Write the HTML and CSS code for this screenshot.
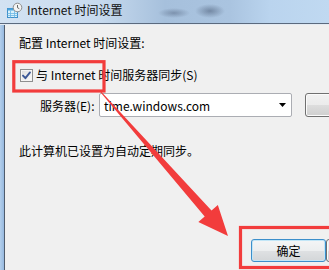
FILE: index.html
```html
<!DOCTYPE html>
<html lang="zh-CN">
<head>
<meta charset="utf-8">
<title>Internet 时间设置</title>
<link rel="stylesheet" href="styles.css">
</head>
<body>
<div class="window">
  <div class="titlebar">
    <svg class="app-icon" width="18" height="16" viewBox="0 0 18 16">
      <rect x="2.5" y="6.5" width="10" height="9" fill="#d9f1fb" stroke="#3f8fc9"/>
      <rect x="2.5" y="6.5" width="10" height="2" fill="#4aa3dd"/>
      <path d="M5.5 8.5v7M9.5 8.5v7M2.5 11.5h10M2.5 13.5h10" stroke="#6bb6e4" stroke-width="0.8"/>
      <circle cx="12.5" cy="5.5" r="4.3" fill="#f4f4f4" stroke="#8d8d8d"/>
      <path d="M12.5 3v2.7l1.8 1" stroke="#555" stroke-width="0.9" fill="none"/>
    </svg>
    <span class="title">Internet 时间设置</span>
  </div>
  <div class="frame">
    <div class="frame-edge"></div>
    <div class="content">
      <div class="heading">配置 Internet 时间设置:</div>
      <label class="check-row">
        <span class="checkbox">
          <svg width="11" height="11" viewBox="0 0 11 11"><path d="M2 5.6 L4.4 8.2 L9 2.4" fill="none" stroke="#3b5796" stroke-width="1.9" stroke-linecap="round" stroke-linejoin="round"/></svg>
        </span>
        <span class="check-label">与 Internet 时间服务器同步(S)</span>
      </label>
      <div class="server-row">
        <span class="server-label">服务器(E):</span>
        <div class="combo">
          <span class="combo-value">time.windows.com</span>
          <svg class="combo-arrow" width="7" height="4" viewBox="0 0 7 4"><path d="M0 0h7L3.5 4z" fill="#000"/></svg>
        </div>
        <button class="btn btn-now"></button>
      </div>
      <div class="status">此计算机已设置为自动定期同步。</div>
      <div class="footer">
        <button class="btn btn-ok">确定</button>
        <button class="btn btn-cancel"></button>
      </div>
    </div>
  </div>
  <svg class="annotations" width="329" height="270" viewBox="0 0 329 270">
    <rect x="13.8" y="61.7" width="90.2" height="29.3" fill="none" stroke="#f23c3c" stroke-width="3.2"/>
    <rect x="240.5" y="227.5" width="100" height="40" fill="none" stroke="#f23c3c" stroke-width="3.2"/>
    <polygon points="100.4,90.7 211.5,210.5 217.85,204.9 228,236 198.35,222.1 204.7,216.5 99.6,91.3" fill="#f23c3c"/>
  </svg>
</div>
</body>
</html>
```

FILE: styles.css
```css
html, body {
  margin: 0;
  padding: 0;
}

body {
  width: 329px;
  height: 270px;
  overflow: hidden;
  font-family: "Noto Sans CJK SC", "Noto Sans", sans-serif;
  font-size: 12px;
  color: #000;
}

.window {
  position: relative;
  width: 329px;
  height: 270px;
  display: flex;
  flex-direction: column;
  background: #f0f0f0;
  overflow: hidden;
}

.titlebar {
  flex: none;
  height: 24px;
  display: flex;
  align-items: flex-start;
  padding-top: 2px;
  box-sizing: border-box;
  border-bottom: 1px solid #5b6a7e;
  background:
    radial-gradient(ellipse 16px 5px at 174px 13px, rgba(90, 108, 135, 0.55), rgba(90, 108, 135, 0)),
    radial-gradient(ellipse 15px 7px at 210px 11px, rgba(80, 98, 125, 0.6), rgba(80, 98, 125, 0)),
    linear-gradient(90deg, #d3e2f2 0px, #c7daee 100px, #a6c0dc 165px, #aac4e0 230px, #bad4ee 270px, #c0d9f1 329px);
}

.app-icon {
  margin-left: 5px;
  flex: none;
}

.title {
  margin-left: 4px;
  line-height: 16px;
  font-size: 12px;
  color: #111;
}

.frame {
  flex: 1;
  display: flex;
  border-top: 1px solid #e4ebf3;
}

.frame-edge {
  width: 4px;
  flex: none;
  background: linear-gradient(90deg, #b3cfec, #97b9df);
  border-right: 1px solid #4f5c6d;
}

.content {
  flex: 1;
  display: flex;
  flex-direction: column;
  padding: 10px 0 0 14px;
  background: #f0f0f0;
}

.heading {
  line-height: 16px;
}

.check-row {
  display: flex;
  align-items: center;
  height: 16px;
  margin-top: 16px;
}

.checkbox {
  width: 13px;
  height: 13px;
  box-sizing: border-box;
  margin-left: 1px;
  border: 1px solid #8e8f8f;
  background: linear-gradient(135deg, #dcdcdc, #fbfbfb);
  box-shadow: inset 0 0 0 1px #f4f4f4;
  display: flex;
  align-items: center;
  justify-content: center;
}

.check-label {
  margin-left: 3px;
  line-height: 16px;
  white-space: nowrap;
}

.server-row {
  display: flex;
  align-items: center;
  margin-top: 10px;
  height: 24px;
}

.server-label {
  width: 56px;
  margin-left: 21px;
  white-space: nowrap;
}

.combo {
  width: 193px;
  height: 24px;
  margin-left: 3px;
  box-sizing: border-box;
  border: 1px solid #abadb3;
  border-radius: 2px;
  background: #fff;
  display: flex;
  align-items: center;
  padding-left: 4px;
}

.combo-value {
  flex: 1;
  white-space: nowrap;
}

.combo-arrow {
  margin-right: 5px;
}

.btn {
  box-sizing: border-box;
  margin: 0;
  padding: 0;
  font: inherit;
  color: #000;
  border-radius: 3px;
  border: 1px solid #707070;
  background: linear-gradient(180deg, #f2f2f2 0%, #ebebeb 50%, #dddddd 51%, #cfcfcf 100%);
  box-shadow: inset 0 0 0 1px #fbfbfb;
}

.btn-now {
  width: 70px;
  height: 24px;
  margin-left: 13px;
  flex: none;
}

.status {
  margin-top: 26px;
  line-height: 16px;
}

.footer {
  display: flex;
  margin-top: 80px;
  padding-left: 232px;
}

.btn-ok {
  width: 75px;
  height: 23px;
  flex: none;
  border-color: #3c8fcb;
  background: linear-gradient(180deg, #f4f5f6 0%, #eceeef 50%, #dfe1e3 51%, #d3d6d8 100%);
  box-shadow: inset 0 0 0 1px #c2e6f7;
  line-height: 20px;
  text-align: center;
}

.btn-cancel {
  width: 75px;
  height: 23px;
  flex: none;
}

.annotations {
  position: absolute;
  left: 0;
  top: 0;
  pointer-events: none;
}
```
